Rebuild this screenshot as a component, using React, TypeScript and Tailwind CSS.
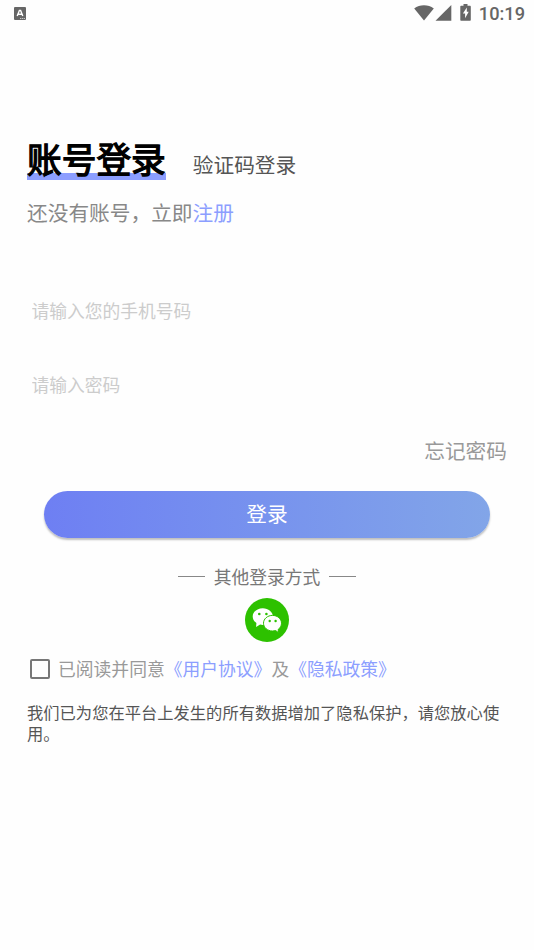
import { useState } from "react";

function StatusBar() {
  return (
    <header className="flex h-7 items-center justify-between pl-3.5 pr-[9px] text-[#666666]">
      <svg width="12" height="13" viewBox="0 0 12 13" className="-mt-px block">
        <rect width="12" height="13" rx="1" fill="currentColor" />
        <path d="M3.2 9 5.4 3.4h1.2L8.8 9M4 7.2h4" fill="none" stroke="#fff" strokeWidth="1.4" />
        <path d="M6 11.5h5" stroke="#ddd" strokeWidth="0.8" strokeDasharray="1.4 0.6" />
      </svg>
      <div className="flex items-center">
        <svg width="20" height="16" viewBox="0 0 20 16" fill="currentColor" className="-mt-0.5">
          <path d="M10 15.6 0.2 3.4C3 1.3 6.4 0.2 10 0.2s7 1.1 9.8 3.2z" />
        </svg>
        <svg width="17" height="16" viewBox="0 0 17 16" fill="currentColor" className="-mt-0.5 ml-px">
          <path d="M0.5 15.8 16.3 0v15.8z" />
        </svg>
        <svg width="12" height="17" viewBox="0 0 12 17" className="-mt-[3px] ml-2">
          <path
            d="M3.5 0h4v1.7h2.3c.6 0 1 .4 1 1v13c0 .6-.4 1-1 1H1.3c-.6 0-1-.4-1-1v-13c0-.6.4-1 1-1h2.2z"
            fill="currentColor"
          />
          <path d="M6.8 3.4 2.9 9.4h2.2v4.8l3.6-6.4H6.8z" fill="#fff" />
        </svg>
        <span className="ml-[7px] font-[Roboto] text-[18.2px] leading-7 font-medium">10:19</span>
      </div>
    </header>
  );
}

function WechatIcon() {
  return (
    <svg width="44" height="44" viewBox="0 0 44 44" className="block">
      <circle cx="22" cy="22" r="22" fill="#2dc100" />
      <path
        d="M17.8 10.2c-5.6 0-10.1 3.7-10.1 8.3 0 2.6 1.4 4.9 3.7 6.4l-.3 4 4-2.4c.9.2 1.8.4 2.7.4 5.6 0 10.1-3.8 10.1-8.4s-4.5-8.3-10.1-8.3z"
        fill="#fff"
      />
      <path
        d="M27.5 17.4c-5 0-9 3.5-9 7.8s4 7.8 9 7.8c1.1 0 2.1-.2 3-.5l3.2 2.2-.6-3.2c2.1-1.4 3.4-3.7 3.4-6.3 0-4.3-4-7.8-9-7.8z"
        fill="#fff"
        stroke="#2dc100"
        strokeWidth="1"
      />
      <g fill="#2dc100">
        <circle cx="14.3" cy="16" r="1.3" />
        <circle cx="21.4" cy="16" r="1.3" />
        <circle cx="24.7" cy="23" r="1.2" />
        <circle cx="30.6" cy="23" r="1.2" />
      </g>
    </svg>
  );
}

export default function App() {
  const [phone, setPhone] = useState("");
  const [password, setPassword] = useState("");
  const [agreed, setAgreed] = useState(false);

  return (
    <div className="flex min-h-[950px] w-full flex-col bg-[#fefefe] font-['Noto_Sans_CJK_SC',sans-serif]">
      <StatusBar />

      <main className="flex flex-col px-[27px] pt-[108px]">
        {/* Tabs */}
        <div className="flex items-end">
          <h1 className="bg-linear-to-t from-[#8c9eff] from-[7px] to-transparent to-[7px] pt-px text-[34.7px] leading-[43px] font-normal text-black [-webkit-text-stroke:1.3px_black]">
            账号登录
          </h1>
          <button className="mb-px ml-[27px] text-[20.7px] leading-[30px] text-[#555555]">验证码登录</button>
        </div>

        <p className="mt-[17px] text-[20.7px] leading-[30px] text-[#888888]">
          还没有账号，立即<a className="text-[#8c9eff]">注册</a>
        </p>

        {/* Form */}
        <input
          type="tel"
          value={phone}
          onChange={(e) => setPhone(e.target.value)}
          placeholder="请输入您的手机号码"
          className="mt-[68px] h-[30px] pr-1 pl-[4.5px] text-[17.75px] text-[#555555] outline-none placeholder:text-[#cccccc]"
        />
        <input
          type="password"
          value={password}
          onChange={(e) => setPassword(e.target.value)}
          placeholder="请输入密码"
          className="mt-11 h-[30px] pr-1 pl-[4.5px] text-[17.75px] text-[#555555] outline-none placeholder:text-[#cccccc]"
        />
        <a className="mt-9 self-end text-[20.7px] leading-[30px] text-[#999999]">忘记密码</a>

        <button className="mx-[17px] mt-[26px] h-[47px] rounded-full bg-linear-to-r from-[#6e7ff3] to-[#82a5e8] pb-px text-[20.7px] text-white shadow-[0_2px_2px_rgba(0,0,0,0.25)]">
          登录
        </button>

        {/* Third-party login */}
        <div className="mt-[23px] flex items-center justify-center gap-[9px]">
          <span className="h-px w-[27px] bg-[#888888]" />
          <span className="text-[17.8px] leading-[30px] text-[#777777]">其他登录方式</span>
          <span className="h-px w-[27px] bg-[#888888]" />
        </div>
        <button className="mt-[7px] self-center">
          <WechatIcon />
        </button>

        <label className="mt-3 flex items-center pl-[3px] text-[17.8px] leading-[30px] text-[#999999]">
          <input
            type="checkbox"
            checked={agreed}
            onChange={(e) => setAgreed(e.target.checked)}
            className="mr-2 size-5 appearance-none rounded-[2px] border-2 border-[#777777] checked:bg-[#8c9eff]"
          />
          <span className="-mt-px">
            已阅读并同意<a className="text-[#8c9eff]">《用户协议》</a>及
            <a className="text-[#8c9eff]">《隐私政策》</a>
          </span>
        </label>

        <p className="mt-[19px] text-[16.3px] leading-[21px] text-[#555555]">
          我们已为您在平台上发生的所有数据增加了隐私保护，请您放心使用。
        </p>
      </main>
    </div>
  );
}
